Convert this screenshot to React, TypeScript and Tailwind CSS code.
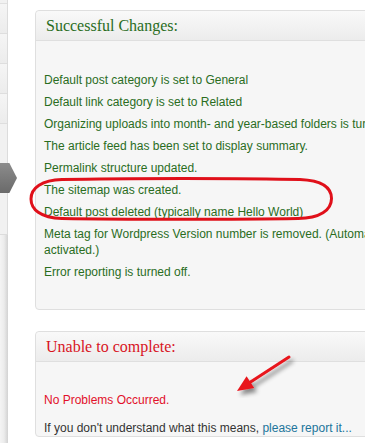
import React from 'react'

const changes = [
	'Default post category is set to General',
	'Default link category is set to Related',
	'Organizing uploads into month- and year-based folders is turned off.',
	'The article feed has been set to display summary.',
	'Permalink structure updated.',
	'The sitemap was created.',
	'Default post deleted (typically name Hello World)',
	'Meta tag for Wordpress Version number is removed. (Automatically activated.)',
	'Error reporting is turned off.'
]

function Box({ title, titleClass, children, className }: { title: string; titleClass: string; children: React.ReactNode; className?: string }) {
	return (
		<div className={`w-[392px] shrink-0 rounded-[4px] border border-[#dfdfdf] bg-[#f6f6f6] ${className ?? ''}`}>
			<div className="h-[30px] rounded-t-[4px] border-b border-[#dfdfdf] bg-gradient-to-b from-[#f9f9f9] to-[#ececec] pl-[10px] flex items-center">
				<h3 className={`font-['Liberation_Serif',serif] text-[16px] leading-none ${titleClass}`}>{title}</h3>
			</div>
			{children}
		</div>
	)
}

export default function App() {
	return (
		<div className="relative flex h-[443px] w-[365px] overflow-hidden bg-white font-['Liberation_Sans',Arial,sans-serif]">
			{/* admin menu edge */}
			<aside className="flex w-[8px] shrink-0 flex-col">
				<div className="flex h-[235px] flex-col border-r border-b border-[#dcdcdc] bg-[#f1f1f1]">
					<div className="h-[4px] border-b border-[#e0e0e0]" />
					{[0, 1, 2, 3].map((i) => (
						<div key={i} className="h-[30px] border-b border-[#dedede] bg-gradient-to-b from-[#f5f5f5] to-[#ececec]" />
					))}
				</div>
				<div className="flex-1 bg-gradient-to-r from-[#f4f4f4] via-[#ececec] to-[#d2d2d2]" />
			</aside>

			<main className="min-w-0 flex-1 pl-[27px] pt-[10px]">
				<Box title="Successful Changes:" titleClass="text-[#2a6d1e]">
					<ul className="px-[8px] pt-[31px] pb-[29px] text-[12px] leading-[16px] text-[#2a6d1e]">
						{changes.map((c, idx) => (
							<li key={idx} className={`mb-[6px] last:mb-0 ${idx === 2 ? 'whitespace-nowrap' : ''}`}>
								{c}
							</li>
						))}
					</ul>
				</Box>

				<Box title="Unable to complete:" titleClass="text-[#d8141e]" className="mt-[21px]">
					<div className="px-[8px] pt-[30px] text-[12px] leading-[16px]">
						<p className="text-[#e2102a]">No Problems Occurred.</p>
						<p className="mt-[12px] text-[#333]">
							If you don't understand what this means, <a className="text-[#21759b]">please report it...</a>
						</p>
					</div>
				</Box>
			</main>

			{/* current menu arrow */}
			<div className="absolute left-0 top-[163px] h-[30px] w-[17px] bg-gradient-to-b from-[#8c8c8c] to-[#6a6a6a] [clip-path:polygon(0_0,55%_0,100%_50%,55%_100%,0_100%)]" />

			{/* annotations */}
			<svg className="pointer-events-none absolute left-0 top-0" width="365" height="443">
				<defs>
					<filter id="sh" x="-20%" y="-20%" width="140%" height="140%">
						<feDropShadow dx="3" dy="4" stdDeviation="2" floodColor="#000" floodOpacity="0.45" />
					</filter>
				</defs>
				<path
					d="M62,179.5 C120,178 250,178 300,179.5 C322,180.5 331.5,188 331.5,198.5 C331.5,210 320,218.5 298,218.5 C240,219.5 120,219.5 62,218.5 C40,218 31,209 31,199 C31,188 42,180 62,179.5 Z"
					fill="none"
					stroke="#e0101a"
					strokeWidth="3"
				/>
				<g filter="url(#sh)">
					<line x1="289" y1="357" x2="249" y2="383" stroke="#e8141c" strokeWidth="3" strokeLinecap="round" />
					<polygon points="237,391 246.6,376.3 254.2,388.1" fill="#e8141c" />
				</g>
			</svg>
		</div>
	)
}
